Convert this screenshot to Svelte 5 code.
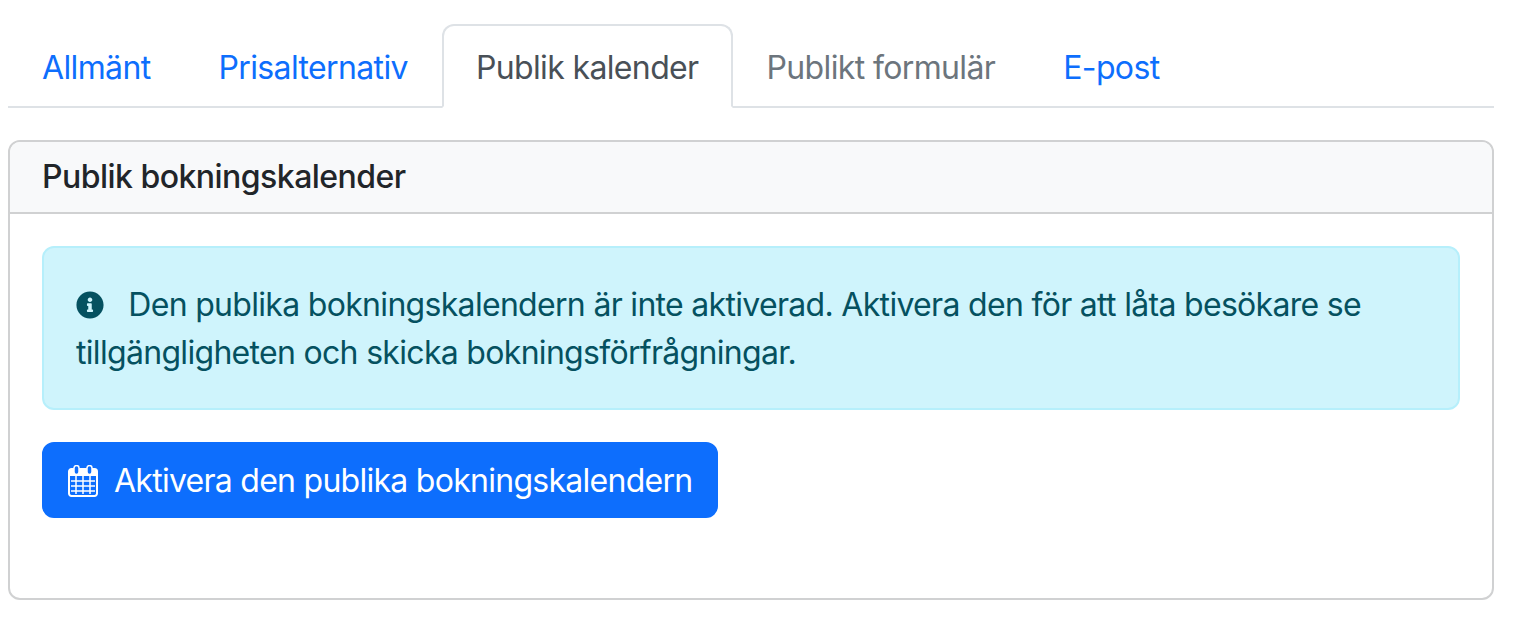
<script>
	const tabs = [
		{ label: "Allmänt", state: "link" },
		{ label: "Prisalternativ", state: "link" },
		{ label: "Publik kalender", state: "active" },
		{ label: "Publikt formulär", state: "disabled" },
		{ label: "E-post", state: "link" }
	]
</script>

<div class="page">
	<ul class="tabs">
		{#each tabs as tab}
			<li class="tab {tab.state}">{tab.label}</li>
		{/each}
	</ul>

	<section class="card">
		<h2 class="card-header">Publik bokningskalender</h2>
		<div class="card-body">
			<div class="alert">
				<svg class="info" viewBox="0 0 512 512" aria-hidden="true">
					<path fill="currentColor" d="M256 8C119.043 8 8 119.083 8 256c0 136.997 111.043 248 248 248s248-111.003 248-248C504 119.083 392.957 8 256 8zm0 110c23.196 0 42 18.804 42 42s-18.804 42-42 42-42-18.804-42-42 18.804-42 42-42zm56 254c0 6.627-5.373 12-12 12h-88c-6.627 0-12-5.373-12-12v-24c0-6.627 5.373-12 12-12h12v-64h-12c-6.627 0-12-5.373-12-12v-24c0-6.627 5.373-12 12-12h64c6.627 0 12 5.373 12 12v100h12c6.627 0 12 5.373 12 12v24z"/>
				</svg>
				Den publika bokningskalendern är inte aktiverad. Aktivera den för att låta besökare se tillgängligheten och skicka bokningsförfrågningar.
			</div>
			<button class="btn">
				<svg class="cal" viewBox="0 0 30 32" aria-hidden="true">
					<path fill="none" stroke="currentColor" stroke-width="2" d="M3.5 4h23a2.5 2.5 0 0 1 2.5 2.5v22a2.5 2.5 0 0 1-2.5 2.5h-23A2.5 2.5 0 0 1 1 28.500v-22A2.500 2.500 0 0 1 3.500 4z"/>
					<path fill="currentColor" d="M1 5h28v6H1z"/>
					<path fill="none" stroke="currentColor" stroke-width="1.500" d="M3 16h24M3 21h24M3 26h24M8 11v18M15 11v18M22 11v18"/>
					<rect x="6" y="0.500" width="5" height="9" rx="2.500" fill="#0d6efd" stroke="currentColor" stroke-width="1.500"/>
					<rect x="19" y="0.500" width="5" height="9" rx="2.500" fill="#0d6efd" stroke="currentColor" stroke-width="1.500"/>
				</svg>
				Aktivera den publika bokningskalendern
			</button>
		</div>
	</section>
</div>

<style>
	:global(body) {
		margin: 0;
		background: #fff;
	}

	.page {
		padding: 24px 22px 0 8px;
		font-family: Inter, "Liberation Sans", sans-serif;
		font-size: 32px;
		letter-spacing: -0.69px;
		line-height: 48px;
		color: #212529;
	}

	.tabs {
		display: flex;
		list-style: none;
		margin: 0 0 32px;
		padding: 0;
		border-bottom: 2px solid #dee2e6;
		height: 82px;
	}

	.tab {
		box-sizing: border-box;
		height: 84px;
		padding: 18px 32px 14px;
		letter-spacing: -0.635px;
		border: 2px solid transparent;
		border-radius: 12px 12px 0 0;
	}

	.link {
		color: #0d6efd;
	}

	.active {
		color: #495057;
		background: #fff;
		border-color: #dee2e6 #dee2e6 #fff;
	}

	.disabled {
		color: #6c757d;
	}

	.card {
		border: 2px solid #d0d1d2;
		border-radius: 12px;
		height: 460px;
		box-sizing: border-box;
		overflow: hidden;
	}

	.card-header {
		margin: 0;
		padding: 11px 32px;
		height: 72px;
		box-sizing: border-box;
		font-size: 32px;
		font-weight: 500;
		letter-spacing: -0.53px;
		background: #f8f9fa;
		border-bottom: 2px solid #d0d1d2;
	}

	.card-body {
		padding: 32px;
	}

	.alert {
		box-sizing: border-box;
		padding: 33px 32px 31px;
		margin-bottom: 32px;
		color: #055160;
		background: #cff4fc;
		border: 2px solid #b6effb;
		border-radius: 12px;
	}

	.info {
		width: 28px;
		height: 28px;
		vertical-align: -3px;
		margin-right: 16px;
	}

	.btn {
		display: inline-flex;
		align-items: center;
		gap: 16px;
		padding: 13px 24px 11px;
		font: inherit;
		letter-spacing: -0.73px;
		color: #fff;
		background: #0d6efd;
		border: 2px solid #0d6efd;
		border-radius: 12px;
	}

	.cal {
		width: 30px;
		height: 32px;
	}
</style>
